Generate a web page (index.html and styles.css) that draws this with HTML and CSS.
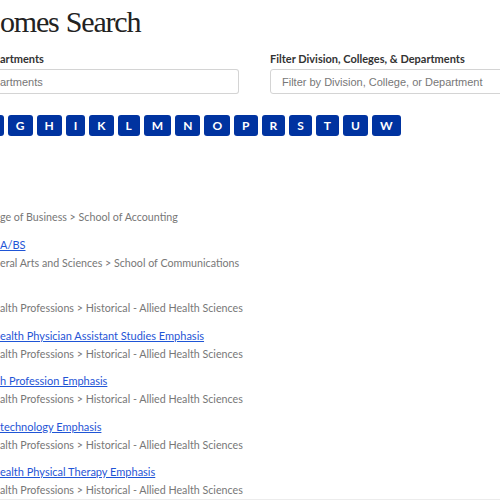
FILE: index.html
```html
<!DOCTYPE html>
<html lang="en">
<head>
    <meta charset="UTF-8">
    <meta name="viewport" content="width=device-width, initial-scale=1.0">
    <title>Outcomes Search</title>
    <link rel="stylesheet" href="styles.css">
</head>
<body>
    <div class="page">
        <h1 class="title">omes Search</h1>

        <div class="filters">
            <div class="field">
                <label class="field-label" for="search">artments</label>
                <input id="search" class="field-input" type="text" placeholder="artments">
            </div>
            <div class="field">
                <label class="field-label" for="division">Filter Division, Colleges, &amp; Departments</label>
                <input id="division" class="field-input" type="text" placeholder="Filter by Division, College, or Department">
            </div>
        </div>

        <div class="letters">
            <button class="letter">F</button>
            <button class="letter">G</button>
            <button class="letter">H</button>
            <button class="letter">I</button>
            <button class="letter">K</button>
            <button class="letter">L</button>
            <button class="letter">M</button>
            <button class="letter">N</button>
            <button class="letter">O</button>
            <button class="letter">P</button>
            <button class="letter">R</button>
            <button class="letter">S</button>
            <button class="letter">T</button>
            <button class="letter">U</button>
            <button class="letter">W</button>
        </div>

        <ul class="results">
            <li class="result">
                <div class="result-title"></div>
                <div class="result-path">ge of Business &gt; School of Accounting</div>
            </li>
            <li class="result">
                <div class="result-title"><a href="#">A/BS</a></div>
                <div class="result-path">eral Arts and Sciences &gt; School of Communications</div>
            </li>
            <li class="result">
                <div class="result-title"></div>
                <div class="result-path">alth Professions &gt; Historical - Allied Health Sciences</div>
            </li>
            <li class="result">
                <div class="result-title"><a href="#">ealth Physician Assistant Studies Emphasis</a></div>
                <div class="result-path">alth Professions &gt; Historical - Allied Health Sciences</div>
            </li>
            <li class="result">
                <div class="result-title"><a href="#">h Profession Emphasis</a></div>
                <div class="result-path">alth Professions &gt; Historical - Allied Health Sciences</div>
            </li>
            <li class="result">
                <div class="result-title"><a href="#">technology Emphasis</a></div>
                <div class="result-path">alth Professions &gt; Historical - Allied Health Sciences</div>
            </li>
            <li class="result">
                <div class="result-title"><a href="#">ealth Physical Therapy Emphasis</a></div>
                <div class="result-path">alth Professions &gt; Historical - Allied Health Sciences</div>
            </li>
        </ul>
        <div class="divider"></div>
    </div>
</body>
</html>
```

FILE: styles.css
```css
body {
    margin: 0;
    overflow: hidden;
    background-color: white;
    font-family: Lato, 'Noto Sans', sans-serif;
}
.page {
    width: 600px;
}
.title {
    margin: 4px 0 0;
    font-family: 'Liberation Serif', 'DejaVu Serif', serif;
    font-size: 30px;
    font-weight: normal;
    line-height: 36px;
    letter-spacing: -1.2px;
    word-spacing: 1px;
    color: #222;
}
.filters {
    display: grid;
    grid-template-columns: 239px 1fr;
    gap: 31px;
    margin-top: 11px;
}
.field {
    display: flex;
    flex-direction: column;
}
.field-label {
    font-size: 11px;
    font-weight: bold;
    line-height: 16px;
    color: #333;
    margin-bottom: 2px;
}
.field-input {
    box-sizing: border-box;
    height: 25px;
    padding: 0 11px;
    font-family: 'Liberation Sans', Arial, sans-serif;
    font-size: 11px;
    color: #555;
    border: 1px solid #d4d4d4;
    border-radius: 3px;
}
.field:first-child .field-input {
    padding-left: 0;
    border-left: none;
    border-radius: 0 3px 3px 0;
}
.field-input::placeholder {
    color: #777;
}
.letters {
    display: flex;
    gap: 4px;
    margin: 21px 0 0 -19px;
}
.letter {
    height: 21px;
    padding: 0 8px;
    font-family: Lato, sans-serif;
    font-size: 12px;
    font-weight: bold;
    color: white;
    background-color: #0033a0;
    border: none;
    border-radius: 3px;
    cursor: pointer;
}
.results {
    list-style: none;
    margin: 54px 0 0;
    padding: 0;
}
.result {
    margin-bottom: 9.5px;
}
.result:last-child {
    margin-bottom: 0;
}
.result-title,
.result-path {
    height: 18px;
    line-height: 18px;
    font-size: 11px;
}
.result-title a {
    color: #1f55d6;
}
.result-path {
    font-size: 10.7px;
    color: #777;
}
.divider {
    height: 3px;
    background-color: #ececec;
}
```
